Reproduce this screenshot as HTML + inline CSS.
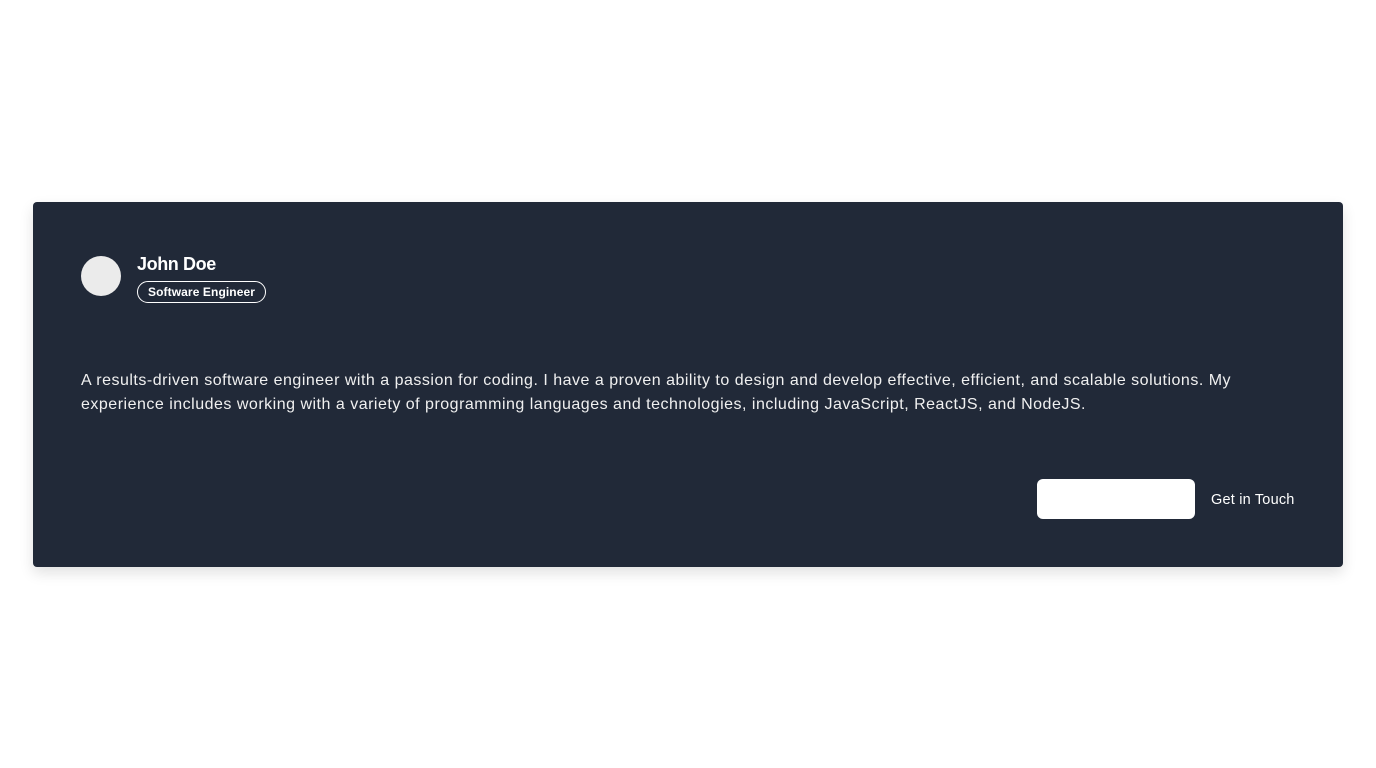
<!DOCTYPE html>
<html><head><meta charset="utf-8"><style>
*{margin:0;padding:0;box-sizing:border-box}
body{width:1376px;height:768px;background:#fff;font-family:"Liberation Sans",sans-serif;position:relative}
.card{position:absolute;left:33px;top:202px;width:1310px;height:365px;background:#212938;border-radius:4px;box-shadow:0 6px 14px rgba(0,0,0,.12)}
.av{position:absolute;left:48px;top:54px;width:40px;height:40px;border-radius:50%;background:#ebebeb}
.name{position:absolute;left:104px;top:52px;color:#fff;font-weight:bold;font-size:18px;letter-spacing:-0.4px}
.badge{position:absolute;left:104px;top:79px;height:22px;padding:0 10px;border:1px solid #fff;border-radius:11px;color:#fff;font-size:12px;font-weight:bold;line-height:20px;letter-spacing:0.1px}
.p{position:absolute;left:48px;top:167px;width:1200px;color:#f0f0f0;font-size:16px;line-height:24px;letter-spacing:0.5px}
.btn{position:absolute;left:1004px;top:277px;width:158px;height:40px;background:#fff;border-radius:6px}
.gt{position:absolute;left:1178px;top:290px;color:#fff;font-size:14.5px;letter-spacing:0.2px}
</style></head><body>
<div class="card">
<div class="av"></div>
<div class="name">John Doe</div>
<div class="badge">Software Engineer</div>
<div class="p">A results-driven software engineer with a passion for coding. I have a proven ability to design and develop effective, efficient, and scalable solutions. My experience includes working with a variety of programming languages and technologies, including JavaScript, ReactJS, and NodeJS.</div>
<div class="btn"></div>
<div class="gt">Get in Touch</div>
</div>
</body></html>
